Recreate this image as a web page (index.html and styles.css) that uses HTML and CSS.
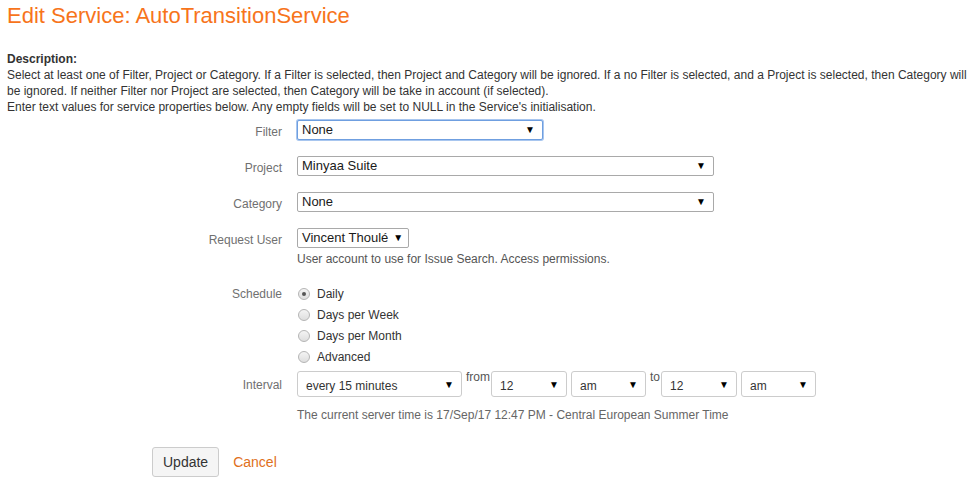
FILE: index.html
```html
<!DOCTYPE html>
<html lang="en">
<head>
    <meta charset="UTF-8">
    <meta name="viewport" content="width=device-width, initial-scale=1.0">
    <title>Edit Service</title>
    <link rel="stylesheet" href="styles.css">
</head>
<body>
    <h1 class="page-title">Edit Service: AutoTransitionService</h1>

    <div class="description">
        <strong>Description:</strong><br>
        Select at least one of Filter, Project or Category. If a Filter is selected, then Project and Category will be ignored. If a no Filter is selected, and a Project is selected, then Category will be ignored. If neither Filter nor Project are selected, then Category will be take in account (if selected).<br>
        Enter text values for service properties below. Any empty fields will be set to NULL in the Service's initialisation.
    </div>

    <form class="service-form">
        <div class="field-row">
            <label class="field-label">Filter</label>
            <div class="field-value">
                <span class="select select-focus" style="width: 246px;">None</span>
            </div>
        </div>

        <div class="field-row">
            <label class="field-label">Project</label>
            <div class="field-value">
                <span class="select" style="width: 417px;">Minyaa Suite</span>
            </div>
        </div>

        <div class="field-row">
            <label class="field-label">Category</label>
            <div class="field-value">
                <span class="select" style="width: 417px;">None</span>
            </div>
        </div>

        <div class="field-row">
            <label class="field-label">Request User</label>
            <div class="field-value">
                <span class="select select-auto">Vincent Thoulé</span>
                <div class="help">User account to use for Issue Search. Access permissions.</div>
            </div>
        </div>

        <div class="field-row schedule-row">
            <label class="field-label">Schedule</label>
            <div class="field-value radios">
                <label class="radio"><input type="radio" name="schedule" checked> Daily</label>
                <label class="radio"><input type="radio" name="schedule"> Days per Week</label>
                <label class="radio"><input type="radio" name="schedule"> Days per Month</label>
                <label class="radio"><input type="radio" name="schedule"> Advanced</label>
            </div>
        </div>

        <div class="field-row interval-row">
            <label class="field-label">Interval</label>
            <div class="field-value">
                <div class="interval">
                    <span class="select small" style="width: 165px;">every 15 minutes</span>
                    <span class="joiner">from</span>
                    <span class="select small" style="width: 76px;">12</span>
                    <span class="select small" style="width: 75px;">am</span>
                    <span class="joiner">to</span>
                    <span class="select small" style="width: 76px;">12</span>
                    <span class="select small" style="width: 75px;">am</span>
                </div>
                <div class="help server-time">The current server time is 17/Sep/17 12:47 PM - Central European Summer Time</div>
            </div>
        </div>

        <div class="buttons">
            <button type="button" class="btn">Update</button>
            <a href="#" class="cancel">Cancel</a>
        </div>
    </form>
</body>
</html>
```

FILE: styles.css
```css
body {
    margin: 0;
    padding: 0 7px;
    font-family: "Liberation Sans", Arial, sans-serif;
    font-size: 12px;
    color: #333333;
    background: #ffffff;
}

.page-title {
    margin: 0;
    padding-top: 3px;
    font-size: 22px;
    font-weight: normal;
    color: #f7741b;
    line-height: 26px;
}

.description {
    margin-top: 22px;
    line-height: 16px;
}

.service-form {
    margin-top: 5px;
}

.field-row {
    display: grid;
    grid-template-columns: 275px 1fr;
    column-gap: 15px;
    margin-bottom: 16px;
}

.field-label {
    text-align: right;
    color: #707070;
    padding-top: 5px;
}

.select {
    position: relative;
    display: inline-block;
    box-sizing: border-box;
    height: 20px;
    line-height: 18px;
    padding: 0 24px 0 4px;
    border: 1px solid #a9a9a9;
    border-radius: 2px;
    font-size: 13px;
    color: #1a1a1a;
    background: #ffffff;
    vertical-align: top;
}

/* dropdown arrow */
.select::after {
    content: "\25BC";
    position: absolute;
    right: 7px;
    top: 0;
    font-size: 10px;
    color: #000000;
}

.select-focus {
    border-color: #6f9fe0;
    box-shadow: 0 0 0 1px #a8c6ef;
}

.select-auto {
    padding-right: 20px;
}

.select-auto::after {
    right: 5px;
}

.help {
    margin-top: 3px;
    line-height: 16px;
    color: #555555;
}

.schedule-row {
    margin-top: 20px;
    margin-bottom: 7px;
}

.schedule-row .field-label {
    padding-top: 0;
}

.radios {
    display: flex;
    flex-direction: column;
    gap: 7px;
}

.radio {
    display: flex;
    align-items: center;
    gap: 7px;
    line-height: 14px;
    color: #333333;
}

.radio input {
    appearance: none;
    margin: 0 0 0 1px;
    width: 12px;
    height: 12px;
    border: 1px solid #b5b5b5;
    border-radius: 50%;
    background: linear-gradient(#f4f4f4, #dedede);
    position: relative;
}

.radio input:checked::after {
    content: "";
    position: absolute;
    left: 3px;
    top: 3px;
    width: 4px;
    height: 4px;
    border-radius: 50%;
    background: #555555;
}

.interval-row .field-label {
    padding-top: 7px;
}

.interval {
    display: flex;
    align-items: flex-start;
}

.select.small {
    height: 26px;
    line-height: 28px;
    padding-left: 8px;
    font-size: 12px;
    color: #333333;
    border: 1px solid #cccccc;
    border-radius: 3px;
    margin-right: 4px;
}

.select.small::after {
    top: 1px;
    line-height: 24px;
}

.joiner {
    margin: -1px 1px 0 0;
    color: #555555;
}

.server-time {
    margin-top: 10px;
    color: #666666;
}

.buttons {
    display: flex;
    align-items: center;
    gap: 14px;
    padding-left: 145px;
    margin-top: 24px;
}

.btn {
    box-sizing: border-box;
    height: 30px;
    padding: 0 10px;
    font-family: "Liberation Sans", Arial, sans-serif;
    font-size: 14px;
    color: #333333;
    background: #f5f5f5;
    border: 1px solid #cccccc;
    border-radius: 3px;
}

.cancel {
    font-size: 14px;
    color: #e0701b;
    text-decoration: none;
}
```
